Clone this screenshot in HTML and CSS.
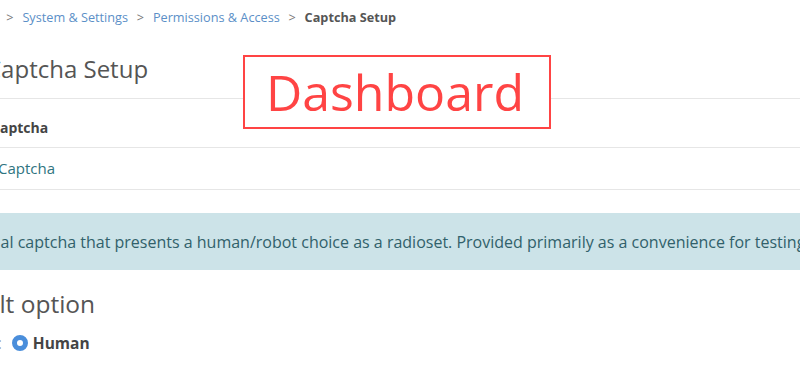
FILE: index.html
```html
<!DOCTYPE html>
<html lang="en">
<head>
    <meta charset="UTF-8">
    <title>Captcha Setup</title>
    <link rel="stylesheet" href="styles.css">
</head>
<body>
    <div class="page">
        <div class="breadcrumb">
            <a href="#">Admin</a>
            <span class="sep">&gt;</span>
            <a href="#">System &amp; Settings</a>
            <span class="sep">&gt;</span>
            <a href="#">Permissions &amp; Access</a>
            <span class="sep">&gt;</span>
            <span class="current">Captcha Setup</span>
        </div>
        <h1 class="title">Captcha Setup</h1>
        <div class="rows">
            <div class="row row-head">Captcha</div>
            <div class="row row-link"><a href="#">Captcha</a></div>
        </div>
        <div class="info">A trivial captcha that presents a human/robot choice as a radioset. Provided primarily as a convenience for testing.</div>
        <h2 class="subtitle">Default option</h2>
        <div class="choice">
            <span class="choice-label">Default:</span>
            <span class="radio"></span>
            <span class="choice-value">Human</span>
        </div>
    </div>
    <div class="stamp">Dashboard</div>
</body>
</html>
```

FILE: styles.css
```css
body {
    margin: 0;
    font-family: 'Open Sans', 'Noto Sans', Arial, sans-serif;
    color: #555;
    background: #fff;
    overflow: hidden;
    position: relative;
    height: 385px;
}
a {
    text-decoration: none;
}
.page {
    margin-left: -12px;
    width: 1100px;
}
.breadcrumb {
    font-size: 12.7px;
    line-height: 18px;
    padding-top: 8px;
    margin-left: -29px;
}
.breadcrumb a {
    color: #5b8fc7;
}
.breadcrumb .sep {
    color: #777;
    margin: 0 5.5px;
}
.breadcrumb .current {
    color: #555;
    font-weight: 700;
}
.title {
    font-size: 24px;
    font-weight: 400;
    color: #555;
    margin: 0 0 0 -2px;
    padding: 26px 0 12px;
    line-height: 34px;
}
.rows {
    border-top: 1px solid #e6e6e6;
}
.row {
    font-size: 14px;
    line-height: 20px;
    padding: 10px 0;
    border-bottom: 1px solid #e6e6e6;
}
.row-head {
    font-weight: 700;
    color: #444;
    padding-left: 3px;
    padding-top: 19px;
    padding-bottom: 9px;
}
.row-link a {
    display: inline-block;
    font-size: 15px;
    color: #2f7480;
    margin-left: 10px;
}
.info {
    margin-top: 23px;
    background: #cce3e8;
    color: #31616b;
    font-size: 16px;
    line-height: 22px;
    padding: 18px 0 17px 12px;
    white-space: nowrap;
    text-indent: -42px;
}
.subtitle {
    font-size: 24.5px;
    font-weight: 400;
    color: #555;
    margin: 17px 0 0 -57px;
    line-height: 34px;
}
.choice {
    display: flex;
    align-items: center;
    font-size: 15.5px;
    line-height: 22px;
    margin-top: 11px;
    margin-left: -43px;
}
.choice-label {
    color: #999;
    margin-right: 10px;
}
.radio {
    box-sizing: border-box;
    width: 16px;
    height: 16px;
    border: 5px solid #4a8edb;
    border-radius: 50%;
    background: #fff;
    margin-right: 5px;
}
.choice-value {
    font-weight: 700;
    color: #444;
}
.stamp {
    position: absolute;
    left: 243px;
    top: 55px;
    width: 300px;
    height: 70px;
    padding-right: 4px;
    border: 2px solid #ff4444;
    background: #fff;
    color: #ff4444;
    font-size: 50px;
    line-height: 70px;
    text-align: center;
}
```
